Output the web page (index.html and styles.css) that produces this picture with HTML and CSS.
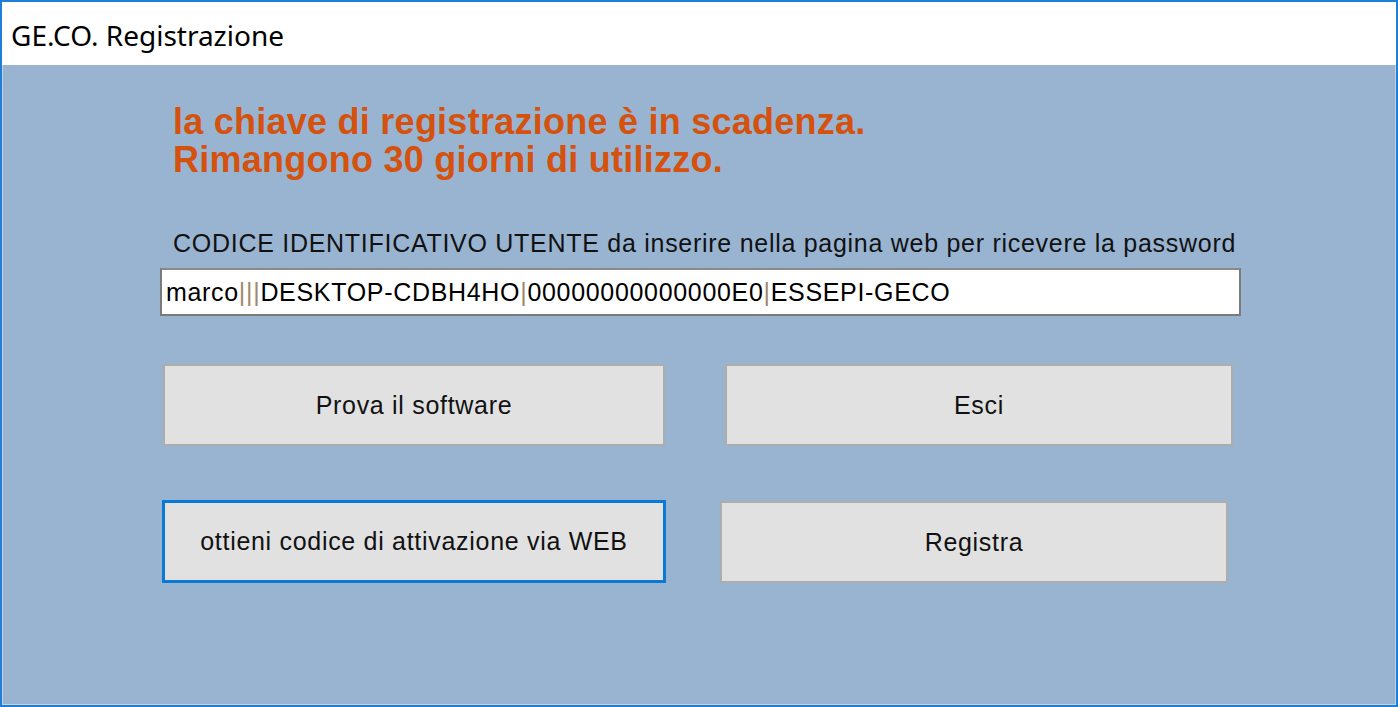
FILE: index.html
```html
<!DOCTYPE html>
<html lang="it">
<head>
<meta charset="utf-8">
<title>GE.CO. Registrazione</title>
<link rel="stylesheet" href="styles.css">
</head>
<body>
<div class="window">
  <div class="titlebar"><span class="title">GE.CO. Registrazione</span></div>
  <div class="client">
    <div class="warning">
      <div>la chiave di registrazione è in scadenza.</div>
      <div>Rimangono 30 giorni di utilizzo.</div>
    </div>
    <div class="label">CODICE IDENTIFICATIVO UTENTE da inserire nella pagina web per ricevere la password</div>
    <div class="field">marco<span class="sep">|||</span>DESKTOP-CDBH4HO<span class="sep">|</span>00000000000000E0<span class="sep">|</span>ESSEPI-GECO</div>
    <div class="row row1">
      <button class="btn b1">Prova il software</button>
      <button class="btn b2">Esci</button>
    </div>
    <div class="row row2">
      <button class="btn b3 focused">ottieni codice di attivazione via WEB</button>
      <button class="btn b4">Registra</button>
    </div>
  </div>
</div>
</body>
</html>
```
FILE: styles.css
```css
* { box-sizing: border-box; }
html, body { margin: 0; padding: 0; }
body { width: 1398px; height: 707px; overflow: hidden; background: #99b4d1; }
.window {
  width: 1398px;
  height: 707px;
  border: 2px solid #1f7fd8;
  display: flex;
  flex-direction: column;
  background: #99b4d1;
}
.titlebar {
  height: 63px;
  background: #ffffff;
  display: flex;
  align-items: center;
  padding-left: 9px;
  padding-top: 2px;
}
.title {
  font-family: "Noto Sans", "Open Sans", sans-serif;
  font-size: 28px;
  color: #000;
}
.client {
  flex: 1;
  border: 1px solid #c4d3e4;
  border-top: none;
  padding-left: 157px;
  font-family: "Liberation Sans", Arial, sans-serif;
}
.warning {
  margin-left: 13px;
  margin-top: 38px;
  color: #d4520e;
  font-weight: bold;
  font-size: 36px;
  line-height: 38px;
  letter-spacing: 0.25px;
}
.label {
  margin-left: 13px;
  margin-top: 51px;
  font-size: 25px;
  line-height: 26px;
  letter-spacing: 0.72px;
  color: #111;
  white-space: nowrap;
}
.field {
  margin-top: 12px;
  width: 1081px;
  height: 48px;
  background: #fff;
  border: 2px solid #7a7a7a;
  border-top-color: #8a8a8a;
  font-size: 25px;
  line-height: 44px;
  letter-spacing: 0.68px;
  padding-left: 4px;
  color: #000;
  white-space: nowrap;
}
.sep { color: #a08a6e; }
.row { display: flex; }
.row1 { margin-top: 48px; }
.row2 { margin-top: 54px; }
.btn {
  font-family: "Liberation Sans", Arial, sans-serif;
  font-size: 25px;
  letter-spacing: 0.7px;
  color: #111;
  background: #e1e1e1;
  border: 2px solid #adadad;
  padding: 0;
  height: 82px;
}
.b1 { margin-left: 3px; width: 502px; }
.b2 { margin-left: 60px; width: 508px; }
.b3 { margin-left: 2px; width: 504px; height: 83px; }
.b4 { margin-left: 54px; width: 508px; margin-top: 1px; height: 82px; }
.focused { border: 3px solid #0a78d4; }
```
